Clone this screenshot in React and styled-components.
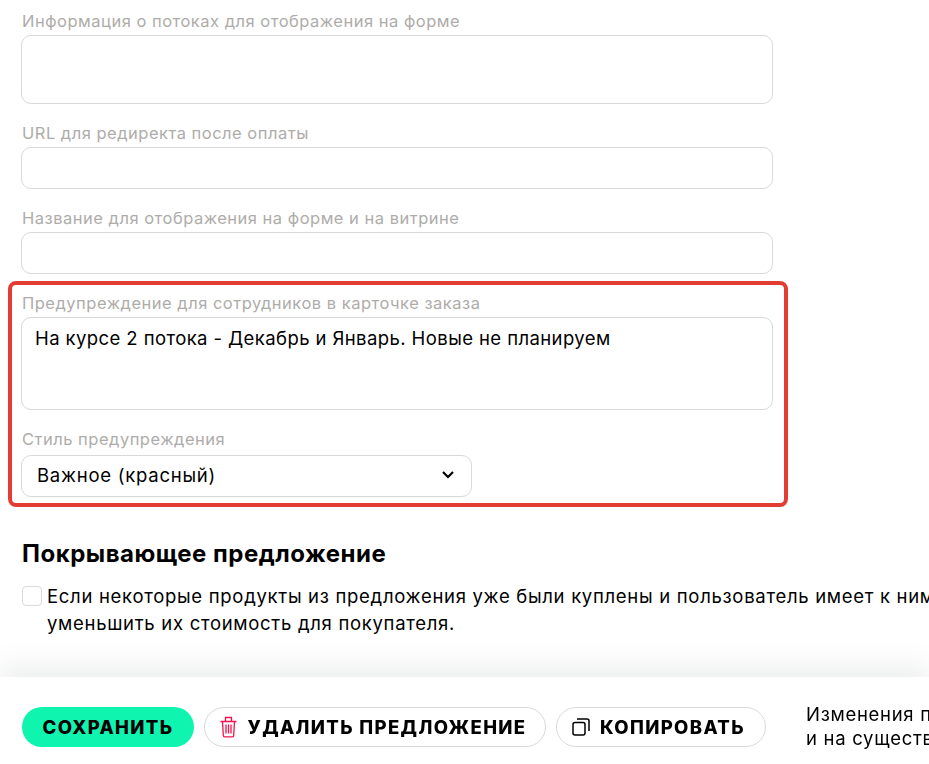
import React from 'react';
import styled, { createGlobalStyle } from 'styled-components';

const GlobalStyle = createGlobalStyle`
  html, body {
    margin: 0;
    padding: 0;
    height: 100%;
    overflow: hidden;
    background: #fff;
  }
  body {
    font-family: 'Inter', 'Noto Sans', sans-serif;
    color: #000;
  }
  * {
    box-sizing: border-box;
  }
`;

const Page = styled.div`
  height: 764px;
  width: 929px;
  overflow: hidden;
  padding: 13px 0 0 21px;
`;

const Field = styled.div`
  width: 752px;
  margin-bottom: ${(p) => p.$gap || 19}px;
`;

const Label = styled.div`
  font-size: 16.5px;
  line-height: 16px;
  letter-spacing: 0.5px;
  color: #aeaca9;
  margin-top: ${(p) => p.$top || 0}px;
  margin-bottom: ${(p) => p.$gap || 6}px;
  padding-left: 1px;
  white-space: nowrap;
`;

const Box = styled.div`
  height: ${(p) => p.$h}px;
  width: 752px;
  border: 1px solid #d9d9d9;
  border-radius: 10px;
  background: #fff;
  padding: 9px 13px;
  font-size: 18.5px;
  letter-spacing: 0.41px;
  line-height: 22px;
  white-space: nowrap;
`;

const Warning = styled.div`
  width: 780px;
  height: 226px;
  margin: 0 0 0 -13px;
  padding: 10px 0 0 9px;
  border: 4px solid #e33d33;
  border-radius: 8px;
`;

const SelectBox = styled.div`
  width: 451px;
  height: 42px;
  border: 1px solid #d9d9d9;
  border-radius: 10px;
  display: flex;
  align-items: center;
  justify-content: space-between;
  padding: 0 16px 2px 15px;
  font-size: 18.5px;
  letter-spacing: 0.75px;
`;

const Heading = styled.h2`
  margin: 33px 0 18px;
  font-size: 24px;
  line-height: 28px;
  letter-spacing: 0.5px;
  font-weight: 700;
  padding-left: 1px;
`;

const CheckRow = styled.div`
  display: flex;
  gap: 5px;
  width: 908px;
  overflow: hidden;
`;

const CheckBox = styled.div`
  flex: none;
  width: 20px;
  height: 20px;
  margin: 0 0 0 1px;
  border: 1px solid #d9d9d9;
  border-radius: 4px;
`;

const CheckText = styled.div`
  font-size: 18.5px;
  letter-spacing: 0.7px;
  line-height: 27px;
  white-space: nowrap;
  margin-top: -3px;
`;

const Footer = styled.div`
  position: fixed;
  left: 0;
  right: 0;
  bottom: 0;
  height: 87px;
  background: #fff;
  box-shadow: 0 -10px 26px rgba(110, 125, 120, 0.14);
  display: flex;
  align-items: center;
  gap: 10px;
  padding: 13px 0 0 22px;
  overflow: hidden;
`;

const Button = styled.button`
  flex: none;
  height: 40px;
  width: ${(p) => p.$w}px;
  border-radius: 20px;
  border: ${(p) => (p.$primary ? 'none' : '1px solid #d9d9d9')};
  background: ${(p) => (p.$primary ? '#0ff5b0' : '#fff')};
  display: flex;
  align-items: center;
  justify-content: center;
  gap: ${(p) => p.$iconGap || 0}px;
  font-family: inherit;
  font-size: 18.5px;
  font-weight: 800;
  letter-spacing: 1.35px;
  color: #000;
  padding: 0 ${(p) => p.$shift || 0}px 0 0;
`;

const Note = styled.div`
  flex: none;
  margin-left: 30px;
  margin-top: -2px;
  font-size: 18.5px;
  letter-spacing: 0.7px;
  line-height: 24px;
  white-space: nowrap;
`;

function Trash() {
  return (
    <svg width="17" height="22" viewBox="0 0 17 22" fill="none" stroke="#f5114f" strokeWidth="1.3">
      <path d="M0.5 5.5h16M5.5 5V1.5h6V5M2.5 5.5l0.8 14a1.5 1.5 0 0 0 1.5 1.4h7.4a1.5 1.5 0 0 0 1.5-1.4l0.8-14M6 8.5v9M8.5 8.5v9M11 8.5v9" />
    </svg>
  );
}

function CopyIcon() {
  return (
    <svg width="18" height="18" viewBox="0 0 18 18" fill="none" stroke="#000" strokeWidth="1.5">
      <rect x="1" y="4.5" width="12" height="12.5" rx="2" />
      <path d="M5 1h10a2 2 0 0 1 2 2v10" />
    </svg>
  );
}

function Chevron() {
  return (
    <svg width="14" height="10" viewBox="0 0 14 10" fill="none" stroke="#000" strokeWidth="2.2">
      <path d="M2 2l5 5 5-5" />
    </svg>
  );
}

export default function App() {
  return (
    <>
      <GlobalStyle />
      <Page>
        <Field $gap={21}>
          <Label>Информация о потоках для отображения на форме</Label>
          <Box $h={69} />
        </Field>
        <Field $gap={21}>
          <Label>URL для редиректа после оплаты</Label>
          <Box $h={42} />
        </Field>
        <Field $gap={7}>
          <Label>Название для отображения на форме и на витрине</Label>
          <Box $h={42} />
        </Field>
        <Warning>
          <Label>Предупреждение для сотрудников в карточке заказа</Label>
          <Box $h={93}>На курсе 2 потока - Декабрь и Январь. Новые не планируем</Box>
          <Label $top={21} $gap={8}>Стиль предупреждения</Label>
          <SelectBox>
            Важное (красный)
            <Chevron />
          </SelectBox>
        </Warning>
        <Heading>Покрывающее предложение</Heading>
        <CheckRow>
          <CheckBox />
          <CheckText>
            Если некоторые продукты из предложения уже были куплены и пользователь имеет к ним доступ,
            <br />
            уменьшить их стоимость для покупателя.
          </CheckText>
        </CheckRow>
      </Page>
      <Footer>
        <Button $primary $w={172}>СОХРАНИТЬ</Button>
        <Button $w={342} $iconGap={11} $shift={4}><Trash />УДАЛИТЬ ПРЕДЛОЖЕНИЕ</Button>
        <Button $w={210} $iconGap={10} $shift={5}><CopyIcon />КОПИРОВАТЬ</Button>
        <Note>
          Изменения предложения применятся к новым заказам
          <br />
          и на существующие заказы не повлияют
        </Note>
      </Footer>
    </>
  );
}
